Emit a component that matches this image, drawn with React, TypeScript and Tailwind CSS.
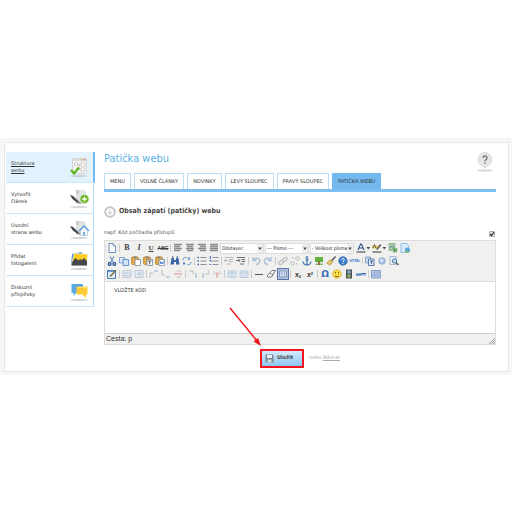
import type { ReactNode } from "react";
import clsx from "clsx";

const sideLinks = [
  { lines: ["Struktura", "webu"], icon: <StructureIcon />, active: true },
  { lines: ["Vytvořit", "článek"], icon: <ArticleIcon /> },
  { lines: ["Úvodní", "strana webu"], icon: <HomeIcon /> },
  { lines: ["Přidat", "fotogalerii"], icon: <GalleryIcon /> },
  { lines: ["Diskuzní", "příspěvky"], icon: <ForumIcon /> },
];

const tabs = ["MENU", "VOLNÉ ČLÁNKY", "NOVINKY", "LEVÝ SLOUPEC", "PRAVÝ SLOUPEC", "PATIČKA WEBU"];

/* ---------- sidebar icons ---------- */

function SideIcon({ children }: { children: ReactNode }) {
  return (
    <svg viewBox="0 0 20 22" className="h-[22px] w-5 shrink-0" aria-hidden="true">
      <ellipse cx="10" cy="20" rx="9" ry="1.2" fill="#b9bcbf" opacity=".6" />
      {children}
    </svg>
  );
}

function StructureIcon() {
  return (
    <SideIcon>
      <rect x="3.5" y="2.5" width="14" height="15" rx="1" fill="#f1f1ef" stroke="#c9cbcb" strokeWidth=".8" />
      <path d="M4 4h13" stroke="#dcdcdc" strokeWidth="2" />
      <path d="M12 3.8h1M13.8 3.8h1" stroke="#e79a3c" strokeWidth="1" />
      <path d="M15.6 3.8h1" stroke="#d9534a" strokeWidth="1" />
      <path d="M8 8.5h4M10 8.5v5h2" stroke="#bbb" strokeWidth=".7" fill="none" />
      <rect x="5.5" y="7" width="3" height="2.6" fill="#fff" stroke="#b5b5b5" strokeWidth=".6" />
      <rect x="12" y="7" width="3.5" height="3" fill="#fff" stroke="#b5b5b5" strokeWidth=".6" />
      <rect x="12" y="12" width="3.5" height="3" fill="#fff" stroke="#b5b5b5" strokeWidth=".6" />
      <path d="M2 14l3 3.5 5-6" stroke="#5db51c" strokeWidth="2.2" fill="none" />
    </SideIcon>
  );
}

function PaperAndPen() {
  return (
    <>
      <path d="M7 3h8l2 2v12H7z" fill="#e3e4e4" />
      <path d="M7 3h3v3L8.5 7.5 7 6z" fill="#c9cbcb" />
      <path d="M1 8l3 1 6 6-1.5 1-5-4z" fill="#3c4247" />
      <path d="M4 9l6 5" stroke="#8a8f94" strokeWidth=".6" />
      <path d="M9 16l3 1-1-2.5z" fill="#777" />
    </>
  );
}

function ArticleIcon() {
  return (
    <SideIcon>
      <PaperAndPen />
      <circle cx="15.5" cy="12" r="4" fill="#6cb52a" stroke="#8bcb4d" strokeWidth=".6" />
      <path d="M15.5 9.7v4.6M13.2 12h4.6" stroke="#fff" strokeWidth="1.4" />
    </SideIcon>
  );
}

function HomeIcon() {
  return (
    <SideIcon>
      <PaperAndPen />
      <path d="M11.5 12v5.5h7V12L15 8.5z" fill="#f4f8fc" stroke="#9cb9d6" strokeWidth=".5" />
      <path d="M10 13l5-5 5 5" stroke="#5b9bd8" strokeWidth="1.3" fill="none" />
      <path d="M14 14h2v3.5h-2z" fill="#75aee0" />
    </SideIcon>
  );
}

function GalleryIcon() {
  return (
    <SideIcon>
      <path d="M3 5l10-2 1 12-12 1z" fill="#4f95d4" />
      <path d="M5 4.5L18.5 5l-.5 11.5H2.5z" fill="#ffd023" stroke="#f0f0f0" strokeWidth=".6" />
      <path d="M2.5 16.5l1-4 3-3.5 3 2.5 1.5-1.5 2 1 2-2 3 3v4.5z" fill="#44484b" />
    </SideIcon>
  );
}

function ForumIcon() {
  return (
    <SideIcon>
      <path d="M2.5 4H14v9H7l-2.5 3v-3h-2z" fill="#5ca9e2" />
      <path d="M7.5 6.5h11v8H17V18l-3.5-3.5h-6z" fill="#ffcb32" />
      <path d="M8.5 7.5h9" stroke="#ffe07d" strokeWidth="1" />
    </SideIcon>
  );
}

/* ---------- editor toolbar ---------- */

function Tool({ label, children, active, dim }: { label: string; children: ReactNode; active?: boolean; dim?: boolean }) {
  return (
    <button
      type="button"
      aria-label={label}
      className={clsx(
        "flex h-3 w-3 shrink-0 items-center justify-center",
        active && "border border-[#5874a8] bg-[#b6c4de]",
        dim && "opacity-40",
      )}
    >
      <svg viewBox="0 0 12 12" className="h-3 w-3 shrink-0" fill="none" aria-hidden="true">
        {children}
      </svg>
    </button>
  );
}

function Sep() {
  return (
    <span className="flex w-[3px] shrink-0 justify-center">
      <span className="h-2 w-px bg-[#cccccc]" />
    </span>
  );
}

function Glyph({ label, className, children }: { label: string; className: string; children: ReactNode }) {
  return (
    <button
      type="button"
      aria-label={label}
      className={clsx("flex h-3 w-3 shrink-0 items-center justify-center leading-none", className)}
    >
      {children}
    </button>
  );
}

function Lines({ d }: { d: string }) {
  return <path d={d} stroke="#8a8a8a" strokeWidth="1.3" />;
}

function Picker({ label, value }: { label: string; value: string }) {
  return (
    <span className="relative mr-px flex w-11 shrink-0 items-center">
      <select
        aria-label={label}
        className="h-[11px] w-full appearance-none overflow-hidden border border-[#dddddd] bg-white pr-1 pl-px font-['DejaVu_Sans_Condensed','DejaVu_Sans',sans-serif] text-[5px] leading-none text-[#222]"
      >
        <option>{value}</option>
      </select>
      <svg viewBox="0 0 6 9" className="pointer-events-none absolute right-px h-[9px] w-1.5" aria-hidden="true">
        <path d="M0 0h6v9H0z" fill="#eeeeee" />
        <path d="M1.2 3.5h3.6L3 6z" fill="#444" />
      </svg>
    </span>
  );
}

function ColorTool({ label, children }: { label: string; children: ReactNode }) {
  return (
    <button type="button" aria-label={label} className="h-3 w-4 shrink-0">
      <svg viewBox="0 0 16 12" className="h-3 w-4" fill="none" aria-hidden="true">
        {children}
        <path d="M11.5 5h3.6l-1.8 2.5z" fill="#444" />
      </svg>
    </button>
  );
}

const clipboard = (
  <>
    <rect x="1.5" y="2" width="7" height="7.5" rx="1" fill="#e0a94a" stroke="#b57f2c" strokeWidth=".7" />
    <path d="M3.5 1.5h3V3h-3z" fill="#777" />
    <rect x="5" y="4.5" width="5.5" height="6" fill="#fff" stroke="#6c7f9c" strokeWidth=".7" />
  </>
);

function Toolbar() {
  return (
    <div className="overflow-hidden border-b border-[#dddddd] bg-[#f0f0ee] pt-px pl-px">
      <div className="flex h-[13px] items-center">
        <Tool label="Nový dokument">
          <path d="M3 1.5h4L9.5 4v6.5H3z" fill="#fff" stroke="#5f87b8" strokeWidth=".9" />
          <path d="M7 1.5V4h2.5" stroke="#5f87b8" strokeWidth=".7" />
        </Tool>
        <Sep />
        <Glyph label="Tučné" className="font-['Liberation_Serif',serif] text-[8px] font-bold text-[#444]">B</Glyph>
        <Glyph label="Kurzíva" className="font-['Liberation_Serif',serif] text-[8px] font-bold text-[#444] italic">I</Glyph>
        <Glyph label="Podtržené" className="font-['Liberation_Serif',serif] text-[7px] font-bold text-[#444] underline">U</Glyph>
        <Glyph label="Přeškrtnuté" className="font-['Liberation_Sans',sans-serif] text-[5px] font-bold text-[#444] line-through">ABC</Glyph>
        <Sep />
        <Tool label="Vlevo"><Lines d="M2 2.5h8M2 4.5h6M2 6.5h8M2 8.5h6" /></Tool>
        <Tool label="Na střed"><Lines d="M2 2.5h8M3 4.5h6M2 6.5h8M3 8.5h6" /></Tool>
        <Tool label="Vpravo"><Lines d="M2 2.5h8M4 4.5h6M2 6.5h8M4 8.5h6" /></Tool>
        <Tool label="Do bloku"><Lines d="M2 2.5h8M2 4.5h8M2 6.5h8M2 8.5h8" /></Tool>
        <Picker label="Formát" value="Odstavec" />
        <Picker label="Písmo" value="--- Písmo ---" />
        <Picker label="Velikost" value="- Velikost písma -" />
        <ColorTool label="Barva textu">
          <path d="M3 8l2.6-6h.8L9 8M4 6h4" stroke="#36598f" strokeWidth="1.2" />
          <path d="M1.5 10h9" stroke="#888" strokeWidth="1.8" />
        </ColorTool>
        <ColorTool label="Barva pozadí">
          <path d="M1 3.5h5.500v3H1z" fill="#f1d548" />
          <path d="M2 6l1.5-3.500L5 6" stroke="#555" strokeWidth=".9" />
          <path d="M5 7l4-5 1.5 1.3L6.5 8z" fill="#6b6b5c" />
          <path d="M1.5 10h9" stroke="#888" strokeWidth="1.8" />
        </ColorTool>
        <Tool label="Vložit obrázek">
          <path d="M2 1.5h6v7H2z" fill="#a9c9a4" stroke="#7aa887" strokeWidth=".7" />
          <path d="M3 6l2-2 2 2" stroke="#6289b1" />
          <path d="M6 6l4 4M10 6.5l-3.5 4" stroke="#5ba052" strokeWidth="1.5" />
        </Tool>
        <Tool label="Vložit soubor">
          <path d="M2 1.5h5.5l2 2v7H2z" fill="#d9ecfb" stroke="#81b3dc" strokeWidth=".8" />
          <circle cx="8.5" cy="8" r="2.6" fill="#5da9e2" />
          <path d="M6 9.5h4" stroke="#79ba55" strokeWidth="1.4" />
        </Tool>
      </div>

      <div className="flex h-[13px] items-center">
        <Tool label="Vyjmout">
          <path d="M4 1.5l3.5 6M8 1.5l-3.5 6" stroke="#7694c4" strokeWidth="1.3" />
          <circle cx="3.7" cy="9" r="1.4" stroke="#234b92" strokeWidth="1.2" />
          <circle cx="8.3" cy="9" r="1.4" stroke="#234b92" strokeWidth="1.2" />
        </Tool>
        <Tool label="Kopírovat">
          <path d="M1.5 2.5h5V8h-5z" fill="#dde9f8" stroke="#6d92c6" strokeWidth=".8" />
          <path d="M5 4.5h5.5v6H5z" fill="#d0e2f7" stroke="#4d7fbe" strokeWidth=".8" />
        </Tool>
        <Tool label="Vložit">{clipboard}</Tool>
        <Tool label="Vložit jako text">
          {clipboard}
          <path d="M6 6h3.5M7.75 6v3.5" stroke="#444" strokeWidth=".9" />
        </Tool>
        <Tool label="Vložit z Wordu">
          {clipboard}
          <path d="M6 6l1 3 .8-2 .8 2 1-3" stroke="#2f6fc0" strokeWidth=".8" />
        </Tool>
        <Sep />
        <Tool label="Najít">
          <path d="M2.5 3H5v2h2V3h2.5l1 6.5H7V7H5v2.5H1.5z" fill="#3d67a8" />
          <path d="M3 2h1.5M7.5 2H9" stroke="#1d3f77" strokeWidth="1.2" />
        </Tool>
        <Tool label="Nahradit">
          <path d="M2 5c0-3 3-3 4-2M10 7c0 3-3 3-4 2" stroke="#5c97d1" />
          <path d="M8 2v3M6.8 3.8h2M3 7v3M2 8.5h2" stroke="#4a7fc0" />
        </Tool>
        <Sep />
        <Tool label="Odrážky">
          <path d="M1.5 2.5H3M1.5 6H3M1.5 9.5H3" stroke="#3c6bb4" strokeWidth="1.5" />
          <path d="M4.5 2.5h6M4.5 6h6M4.5 9.5h6" stroke="#8a8f98" />
        </Tool>
        <Tool label="Číslování">
          <path d="M2.3 1v3M1.5 5.5H3V7M1.5 9.5H3" stroke="#3c6bb4" />
          <path d="M4.5 2.5h6M4.5 6h6M4.5 9.5h6" stroke="#8a8f98" />
        </Tool>
        <Sep />
        <Tool label="Zmenšit odsazení" dim>
          <path d="M2 2.5h8M6 4.5h4M6 6.5h4M4 9h4M1 5.5h4M3 4L1.5 5.5 3 7" stroke="#666" />
        </Tool>
        <Tool label="Zvětšit odsazení">
          <path d="M2 2.5h8M6.5 4.5H10M6.5 6.5H10M5 9h4M1 5.5h4M3.5 4L5 5.5 3.5 7" stroke="#6f6f6f" />
        </Tool>
        <Sep />
        <Tool label="Zpět" dim>
          <path d="M3 2v3.5h3.5M3 5.5c3-4 8-2 6.5 1.5C9 8.5 8 9.5 6 9.5" stroke="#4275b8" strokeWidth="1.4" />
        </Tool>
        <Tool label="Znovu" dim>
          <path d="M9 2v3.5H5.5M9 5.5C6 1.5 1 3.5 2.5 7 3 8.5 4 9.5 6 9.5" stroke="#4275b8" strokeWidth="1.4" />
        </Tool>
        <Sep />
        <Tool label="Odkaz" dim>
          <rect x="1.5" y="6" width="5" height="3" rx="1.5" transform="rotate(-40 4 7.5)" stroke="#666" />
          <rect x="5.5" y="3" width="5" height="3" rx="1.5" transform="rotate(-40 8 4.5)" stroke="#666" />
        </Tool>
        <Tool label="Zrušit odkaz" dim>
          <rect x="1.5" y="7" width="4" height="3" rx="1.5" stroke="#777" />
          <rect x="6.5" y="2" width="4" height="3" rx="1.5" stroke="#777" />
          <path d="M3 2l2 2M7 8l2 2" stroke="#777" />
        </Tool>
        <Tool label="Kotva">
          <circle cx="6" cy="2.5" r="1" stroke="#3e6fb0" />
          <path d="M6 3.5V10M2 6.5C2.5 9 4 10 6 10s3.5-1 4-3.5M4.5 5h3" stroke="#3e6fb0" strokeWidth="1.2" />
        </Tool>
        <Tool label="Obrázek">
          <path d="M2 2h8v5H2z" fill="#62b23f" />
          <path d="M3 8.5h7V10H2z" fill="#8fb86c" />
          <path d="M5.2 6h1.6v4H5.2z" fill="#8a5a2b" />
        </Tool>
        <Tool label="Vyčistit">
          <path d="M10.5 1.5L6.5 6" stroke="#555" strokeWidth="1.5" />
          <path d="M5.5 4.5L8 7l-3 3.5L1.5 8z" fill="#e3c36c" stroke="#a48739" strokeWidth=".5" />
        </Tool>
        <Tool label="Nápověda">
          <circle cx="6" cy="6" r="4.3" fill="#3d7dcc" stroke="#2c60a5" strokeWidth=".6" />
          <path d="M4.7 4.8c0-2 2.8-1.7 2.6 0C7.2 5.7 6 5.8 6 7M6 8v1" stroke="#fff" />
        </Tool>
        <Glyph label="HTML" className="font-['Liberation_Sans',sans-serif] text-[4px] font-bold text-[#3f7fc9]">HTML</Glyph>
        <Sep />
        <Tool label="Vrstvy">
          <path d="M1.5 2h5v6h-5z" fill="#c5d5ec" stroke="#7b97c0" strokeWidth=".8" />
          <path d="M4.5 4H10v6.5H4.5z" fill="#dfe9f7" stroke="#4a70ab" strokeWidth=".9" />
          <path d="M6 6h3M7.5 6v3" stroke="#35598f" />
        </Tool>
        <Tool label="Média">
          <circle cx="6" cy="6" r="3.3" fill="#a8c3e6" stroke="#7c9cc7" strokeWidth=".7" />
          <circle cx="5.5" cy="5.5" r="1.3" fill="#eef5fd" />
        </Tool>
        <Tool label="Náhled">
          <path d="M2 1.5h6v8H2z" fill="#e9f2fb" stroke="#8aa5c6" strokeWidth=".7" />
          <circle cx="6.5" cy="6" r="2.2" fill="#bddaf2" stroke="#4a7295" strokeWidth=".9" />
          <path d="M8 7.5l2.5 2.5" stroke="#555" strokeWidth="1.3" />
        </Tool>
      </div>

      <div className="flex h-[13px] items-center">
        <Tool label="Upravit">
          <path d="M1.5 2.5h8v8h-8z" fill="#e2ecf8" stroke="#4f7fbd" strokeWidth="1" />
          <path d="M1.5 3h8" stroke="#4f7fbd" strokeWidth="1.5" />
          <path d="M4 8.5l6-6" stroke="#806b3a" strokeWidth="1.5" />
        </Tool>
        <Sep />
        <Tool label="Vlastnosti řádku" dim>
          <path d="M2 2.5h8v7H2zM2 5h8M2 7.5h8" stroke="#6e93c4" fill="#dbe6f4" />
        </Tool>
        <Tool label="Vlastnosti buňky" dim>
          <path d="M2 2.5h8v7H2zM5 5h3v2H5z" stroke="#6e93c4" fill="#dbe6f4" />
        </Tool>
        <Sep />
        <Tool label="Řádek nad" dim>
          <path d="M2 10V5h3" stroke="#777" />
          <path d="M6 3h4" stroke="#5487c9" strokeWidth="1.5" />
        </Tool>
        <Tool label="Řádek pod" dim>
          <path d="M2 2v5h3" stroke="#777" />
          <path d="M6 9h4" stroke="#5487c9" strokeWidth="1.5" />
        </Tool>
        <Tool label="Smazat řádek" dim>
          <path d="M5 3h4M5 9h4" stroke="#888" />
          <path d="M2 6h8" stroke="#d75555" strokeWidth="1.5" />
        </Tool>
        <Sep />
        <Tool label="Sloupec vlevo" dim>
          <path d="M2 3h4v3" stroke="#777" />
          <path d="M9 5v5" stroke="#5487c9" strokeWidth="1.5" />
        </Tool>
        <Tool label="Sloupec vpravo" dim>
          <path d="M10 2v4H6" stroke="#777" />
          <path d="M4 5v5" stroke="#5487c9" strokeWidth="1.5" />
        </Tool>
        <Tool label="Smazat sloupec" dim>
          <path d="M3 3v3h6V3" stroke="#888" />
          <path d="M6 4v6" stroke="#d75555" strokeWidth="1.5" />
        </Tool>
        <Sep />
        <Tool label="Rozdělit buňky" dim>
          <path d="M2 3h8v6.5H2zM6 3v6M2 5h8" stroke="#6e9bd0" fill="#bcd4f0" />
        </Tool>
        <Tool label="Sloučit buňky" dim>
          <path d="M2 3h8v6.5H2zM2 5h8" stroke="#6e9bd0" fill="#bcd4f0" />
        </Tool>
        <Sep />
        <Tool label="Vodorovná čára"><path d="M2 6.5h8" stroke="#555" /></Tool>
        <Tool label="Odstranit formátování">
          <path d="M2 8l5-5.5h3.5L6.5 9H3z" fill="#fff" stroke="#666" strokeWidth=".9" />
          <path d="M4.5 5.5L8 6.5" stroke="#666" strokeWidth=".8" />
        </Tool>
        <Tool label="Pomocné linky" active>
          <path d="M2.5 3h7v6h-7z" fill="#dce6f5" stroke="#7089b5" strokeWidth=".8" />
          <path d="M5 5v4M7.5 5v4M3 5h6" stroke="#8da3cb" strokeWidth=".7" />
        </Tool>
        <Sep />
        <Glyph label="Dolní index" className="font-['Liberation_Sans',sans-serif] text-[7px] font-bold text-[#333]">
          <span>x<sub className="text-[4px]">2</sub></span>
        </Glyph>
        <Glyph label="Horní index" className="font-['Liberation_Sans',sans-serif] text-[7px] font-bold text-[#333]">
          <span>x<sup className="text-[4px]">2</sup></span>
        </Glyph>
        <Sep />
        <Glyph label="Speciální znak" className="font-['DejaVu_Sans',sans-serif] text-[9px] font-bold text-[#3c6fb5]">Ω</Glyph>
        <Tool label="Smajlíci">
          <circle cx="6" cy="6" r="4.2" fill="#ffe04a" stroke="#d9a520" strokeWidth=".8" />
          <path d="M4.5 4v1.5M7.5 4v1.5M3.8 7.5c1 1.5 3.4 1.5 4.4 0" stroke="#70500f" strokeWidth=".9" />
        </Tool>
        <Tool label="Video">
          <path d="M3 1.5h6v9H3z" fill="#4d5157" />
          <path d="M4.5 2.5h3v3h-3z" fill="#82b1d3" />
          <path d="M4.5 6.5h3v3h-3z" fill="#8cba66" />
        </Tool>
        <Tool label="Oddělovač">
          <path d="M1 5h10v2.5H1z" fill="#8fb3e0" />
          <path d="M1 7h5M6 5.5h5" stroke="#345f9b" strokeWidth=".9" />
        </Tool>
        <Sep />
        <Tool label="Tabulka">
          <path d="M1.5 2.5h9V10h-9z" fill="#b5c9e7" stroke="#6e8fc2" strokeWidth=".8" />
          <path d="M1.5 5h9M1.5 7.5h9M4.5 2.5V10M7.5 2.5V10" stroke="#8ca8d3" strokeWidth=".7" />
        </Tool>
      </div>
    </div>
  );
}

/* ---------- page ---------- */

function Sidebar() {
  return (
    <nav className="w-[89px] shrink-0">
      {sideLinks.map((link) => (
        <a
          key={link.lines[0]}
          href="#"
          className={clsx(
            "flex h-[31px] items-center justify-between border-b border-b-[#c9e6fa] pr-1 pl-[5px] text-[5px] leading-[7px] text-[#333]",
            link.active
              ? "border-r-2 border-r-[#74bbf0] bg-[#e3f3fe] underline"
              : "mr-px border-r border-r-[#b5dcf8]",
          )}
        >
          <span>
            {link.lines[0]}
            <br />
            {link.lines[1]}
          </span>
          {link.icon}
        </a>
      ))}
    </nav>
  );
}

function Header() {
  return (
    <header>
      <div className="relative">
        <h1 className="font-['DejaVu_Sans_Condensed','DejaVu_Sans',sans-serif] text-[11px] leading-[14px] text-[#59b1e6]">
          Patička webu
        </h1>
        <button type="button" aria-label="Nápověda" className="absolute top-0 right-0.5">
          <svg viewBox="0 0 18 20" className="h-5 w-[18px]" aria-hidden="true">
            <ellipse cx="9" cy="18.5" rx="8" ry="1" fill="#d4d4d4" />
            <path d="M9 .5a7 7 0 0 1 7 7c0 4-3 6-5 6.8L9 16.5l-2-2.2c-2-.8-5-2.8-5-6.8a7 7 0 0 1 7-7z" fill="#e6e6e6" stroke="#d2d2d2" strokeWidth=".6" />
            <path d="M7 6c0-3 4.2-2.8 4 0C10.900 7.5 9 7.5 9 9.300M9 10.500V12" stroke="#666" strokeWidth="1.2" fill="none" />
          </svg>
        </button>
      </div>
      <nav className="mt-[7px] flex gap-[3px] border-b-[3px] border-[#7cbff0]">
        {tabs.map((tab) => (
          <a
            key={tab}
            href="#"
            className={clsx(
              "flex h-4 items-center rounded-t-[1px] border border-b-0 px-[5px] text-[5px] leading-none whitespace-nowrap text-[#333]",
              tab === "PATIČKA WEBU" ? "border-[#74b9ee] bg-[#74b9ee]" : "border-[#b9dff8] bg-white",
            )}
          >
            {tab}
          </a>
        ))}
      </nav>
    </header>
  );
}

export default function App() {
  return (
    <div className="flex min-h-screen items-center bg-white font-['DejaVu_Sans',sans-serif]">
      <div className="w-full bg-[#f7f7f7] pt-1 pr-[3px] pb-[3px] pl-1">
        <div className="flex gap-[9px] border border-[#e6e6e6] bg-white pt-[9px] pr-3 pb-[3px] pl-px">
          <Sidebar />
          <main className="min-w-0 flex-1">
            <Header />

            <h2 className="mt-3.5 flex h-3 items-center gap-[3px] font-['DejaVu_Sans_Condensed','DejaVu_Sans',sans-serif] text-[7px] font-bold text-[#444]">
              <svg viewBox="0 0 12 12" className="h-3 w-3" fill="none" aria-hidden="true">
                <circle cx="6" cy="6" r="5.8" fill="#c6c6c6" />
                <circle cx="6" cy="6" r="3.8" fill="#fff" />
                <path d="M6 3.5V8M4 6.2l2 2 2-2" stroke="#cfcfcf" strokeWidth="1.1" />
              </svg>
              Obsah zápatí (patičky) webu
            </h2>

            <div className="mt-2.5 flex h-2 items-center justify-between text-[5px] leading-2 text-[#555]">
              <label htmlFor="code">např. Kód počítadla přístupů</label>
              <span className="relative mt-1 mr-px flex">
                <input
                  type="checkbox"
                  aria-label="Zapnout editor"
                  defaultChecked
                  className="peer h-1.5 w-1.5 appearance-none rounded-[1px] border border-[#aaaaaa] bg-[#e8e8e8]"
                />
                <svg viewBox="0 0 6 6" className="pointer-events-none absolute inset-0 hidden h-1.5 w-1.5 peer-checked:block" fill="none" aria-hidden="true">
                  <path d="M1.2 3l1.3 1.5L5 1.2" stroke="#333" strokeWidth="1.2" />
                </svg>
              </span>
            </div>

            <div className="mt-1 border border-[#dddddd]">
              <Toolbar />
              <textarea
                id="code"
                defaultValue="VLOŽTE KÓD"
                className="block h-[51px] w-full resize-none bg-white px-[9px] py-1 text-[5px] leading-2 text-[#333] outline-none"
              />
              <div className="flex h-[11px] items-center justify-between border-t border-[#cccccc] bg-[#f0f0ee] pl-px font-['Liberation_Sans',sans-serif] text-[7px] leading-none text-[#333]">
                <span>Cesta: p</span>
                <svg viewBox="0 0 6 6" className="h-1.5 w-1.5 self-end" aria-hidden="true">
                  <path d="M0 6l6-6M2 6l4-4M4 6l2-2" stroke="#999" strokeWidth=".9" />
                </svg>
              </div>
            </div>

            <div className="mt-1 flex items-center justify-center gap-[5px] text-[5px] text-[#aaa]">
              <span className="relative">
                <button
                  type="button"
                  className="flex h-[19px] w-11 items-center gap-[3px] border-2 border-[#f3141e] bg-linear-to-b from-[#d5ebfc] to-[#8cc6f3] pl-[3px] text-[5px] font-bold text-[#444]"
                >
                  <svg viewBox="0 0 9 9" className="h-[9px] w-[9px]" aria-hidden="true">
                    <path d="M.5.5h8v8h-8z" fill="#7b8791" />
                    <path d="M2 1h5v3H2z" fill="#e8f0f6" />
                    <path d="M2.5 5.5h4v3h-4z" fill="#d5dde3" />
                  </svg>
                  Uložit
                </button>
                <svg viewBox="0 0 34 42" className="pointer-events-none absolute right-[42px] bottom-full h-[42px] w-[34px]" aria-hidden="true">
                  <path d="M2 1l28 34" stroke="#f3141e" strokeWidth="1.4" />
                  <path d="M33 39l-7.5-4.5L30 31z" fill="#f3141e" />
                </svg>
              </span>
              <span>
                nebo <a href="#" className="underline">Návrat</a>
              </span>
            </div>
          </main>
        </div>
      </div>
    </div>
  );
}
